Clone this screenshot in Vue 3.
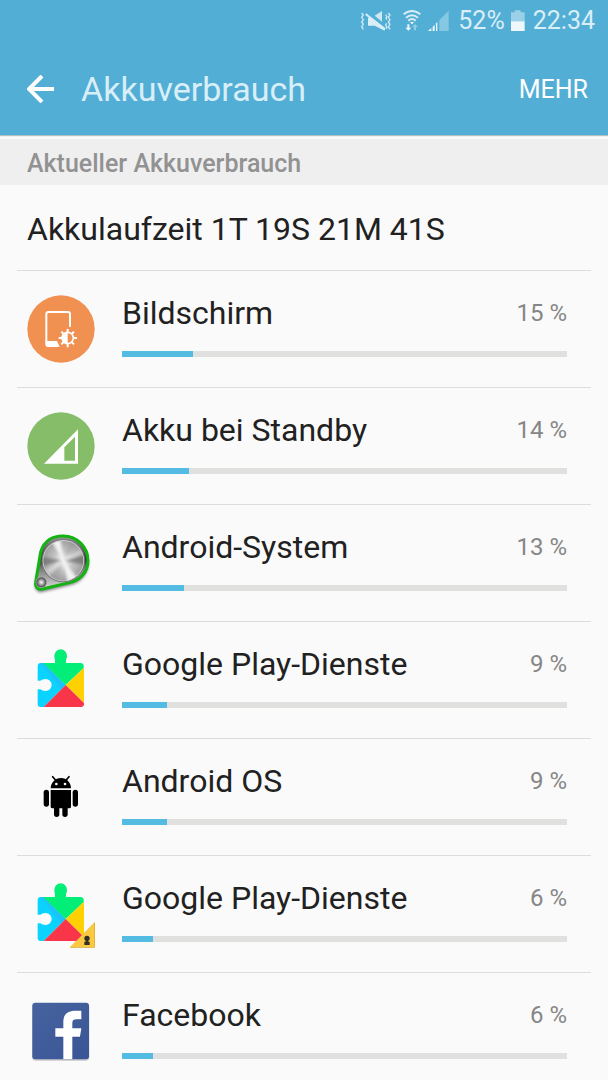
<script setup>
const apps = [
  { id: 1, name: 'Bildschirm',          percent: 15, bar: 16, icon: 'screen' },
  { id: 2, name: 'Akku bei Standby',    percent: 14, bar: 15, icon: 'standby' },
  { id: 3, name: 'Android-System',      percent: 13, bar: 14, icon: 'system' },
  { id: 4, name: 'Google Play-Dienste', percent: 9,  bar: 10, icon: 'play' },
  { id: 5, name: 'Android OS',          percent: 9,  bar: 10, icon: 'android' },
  { id: 6, name: 'Google Play-Dienste', percent: 6,  bar: 7,  icon: 'play-locked' },
  { id: 7, name: 'Facebook',            percent: 6,  bar: 7,  icon: 'facebook' },
]
</script>

<template>
  <div class="screen">
    <header class="top">
      <div class="status">
        <svg class="st-mute" viewBox="0 0 96 66" aria-hidden="true">
          <g fill="none" stroke="#cfe9f4" stroke-width="4">
            <path d="M5 9l5 6-5 7 5 7-5 7 5 7-5 7 5 8" />
            <path d="M85 9l5 6-5 7 5 7-5 7 5 7-5 7 5 8" />
            <path d="M77 14l4 6-3 5 3 4M80 40l-3 5 4 7-3 4" />
          </g>
          <path d="M24 24h12l38 29v9L44 47H24z" fill="#d9eef7" />
          <path d="M44 17L66 3v32z" fill="#cfe9f4" />
          <path d="M17 12l58 46" stroke="#d9eef7" stroke-width="6" />
        </svg>
        <svg class="st-wifi" viewBox="0 0 54 66" aria-hidden="true">
          <g fill="none" stroke="#d9eef7" stroke-width="6">
            <path d="M2 13Q27-7 52 13" />
            <path d="M9 23Q27 8 45 23" />
            <path d="M16 32Q27 22 38 32" />
          </g>
          <path d="M21 37q6-4 12 0l-6 6z" fill="#eef8fc" />
          <path d="M13 43h6v10h6l-9 9-9-9h6z" fill="#eef8fc" />
          <path d="M33 61h6V51h6l-9-9-9 9h6z" fill="#8fcde5" />
        </svg>
        <svg class="st-signal" viewBox="0 0 63 66" aria-hidden="true">
          <path d="M62 2v61H34V30z" fill="#86c7e2" />
          <path d="M0 63l10-9v9zM14 63V50l10-9v22zM20 63h8V36l-8 8z" fill="#eef8fc" />
        </svg>
        <span class="st-level">52%</span>
        <svg class="st-battery" viewBox="0 0 42 66" aria-hidden="true">
          <path d="M11 1h18v6h12v28H0V7h11z" fill="#9bd1e8" />
          <path d="M0 34h41v29H0z" fill="#eef8fc" />
        </svg>
        <span>22:34</span>
      </div>
      <div class="bar">
        <button type="button" class="back" aria-label="Zurück">
          <svg viewBox="0 0 28 28" aria-hidden="true">
            <path d="M15 1L2 14l13 13M2 14h25" fill="none" stroke="#fff" stroke-width="4" />
          </svg>
        </button>
        <h1 class="title">Akkuverbrauch</h1>
        <button type="button" class="more">MEHR</button>
      </div>
    </header>

    <main class="content">
      <h2 class="section">Aktueller Akkuverbrauch</h2>
      <p class="runtime">Akkulaufzeit 1T 19S 21M 41S</p>

      <ul class="list">
        <li v-for="app in apps" :key="app.id" class="row">
          <svg v-if="app.icon === 'screen'" class="icon" viewBox="30 21 216 216" aria-hidden="true">
            <circle cx="138" cy="129" r="101" fill="#f09051" />
            <path d="M165 122V84q0-6-6-6H101q-7 0-7 6v90q0 6 6 6h30" fill="none" stroke="#fff" stroke-width="6" />
            <path d="M92 165h34l8 17H100q-8 0-8-8z" fill="#fff" />
            <circle cx="158" cy="156" r="23" fill="#f09051" />
            <circle cx="158" cy="156" r="17" fill="none" stroke="#fff" stroke-width="5" />
            <path d="M158 138a18 18 0 0 0 0 36z" fill="#fff" />
            <path d="M158 129v9M158 174v10M131 156h9M176 156h10M139 137l7 7M170 168l7 7M139 175l7-7M170 144l7-7" stroke="#fff" stroke-width="6" />
          </svg>

          <svg v-else-if="app.icon === 'standby'" class="icon" viewBox="30 28 216 216" aria-hidden="true">
            <circle cx="138" cy="136" r="101" fill="#86bd69" />
            <path d="M189 86v103H87zM180 108l-32 32v40h32z" fill="#fff" fill-rule="evenodd" />
          </svg>

          <svg v-else-if="app.icon === 'system'" class="icon" viewBox="30 21 216 216" aria-hidden="true">
            <defs>
              <radialGradient id="sysCore">
                <stop offset="0" stop-color="#fff" />
                <stop offset="0.5" stop-color="#c4c4c4" />
                <stop offset="1" stop-color="#a0a0a0" />
              </radialGradient>
              <linearGradient id="sysRim" x1="0" y1="0" x2="0" y2="1">
                <stop offset="0" stop-color="#999" />
                <stop offset="0.45" stop-color="#333" />
                <stop offset="0.6" stop-color="#777" />
                <stop offset="1" stop-color="#ddd" />
              </linearGradient>
              <radialGradient id="sysKnob">
                <stop offset="0" stop-color="#fff" />
                <stop offset="0.4" stop-color="#aaa" />
                <stop offset="0.8" stop-color="#555" />
                <stop offset="1" stop-color="#bbb" />
              </radialGradient>
              <filter id="sysShadow" x="-20%" y="-20%" width="140%" height="140%">
                <feGaussianBlur stdDeviation="5" />
              </filter>
              <filter id="sysSoft"><feGaussianBlur stdDeviation="5" /></filter>
              <clipPath id="sysDisc"><circle cx="145" cy="122" r="60" /></clipPath>
            </defs>
            <path d="M78 97C90 62 116 53 145 54c44 1 75 35 75 75 0 33-21 59-55 67l-83 20c-15 3-24-8-22-23z" fill="#555" opacity="0.75" filter="url(#sysShadow)" />
            <path d="M77 96C88 60 116 47 145 48c42 1 74 33 74 74 0 33-22 58-55 66l-82 19c-14 3-22-7-20-20z" fill="url(#sysRim)" stroke="#12b312" stroke-width="9" />
            <circle cx="145" cy="122" r="65" fill="#777" />
            <circle cx="145" cy="122" r="62" fill="#ddd" />
            <circle cx="145" cy="122" r="60" fill="url(#sysCore)" />
            <g clip-path="url(#sysDisc)">
              <g filter="url(#sysSoft)">
                <path d="M145 122L106 58l30-8zM145 122l14 70 30-16z" fill="#fff" opacity="0.85" />
                <path d="M145 122l66-18v30zM145 122l-66-12v28z" fill="#666" opacity="0.65" />
                <path d="M145 122l20-70 22 18zM145 122l-18 66-26-20z" fill="#888" opacity="0.25" />
                <path d="M145 122l58-38 8 14zM145 122l-62 30 16 18z" fill="#fff" opacity="0.4" />
              </g>
            </g>
            <circle cx="79" cy="187" r="17" fill="url(#sysKnob)" />
          </svg>

          <svg v-else-if="app.icon === 'play' || app.icon === 'play-locked'" class="icon" viewBox="30 27 216 216" aria-hidden="true">
            <path d="M86 84h-9q-9 0-9 9v44h8q5-5 16-5a18 18 0 0 1 0 36q-11 0-16-5h-8v44q0 9 9 9h9l66-66z" fill="#0bd3ff" />
            <path d="M86 84h-9l62 80 13-14z" fill="#24baf5" opacity="0.6" />
            <path d="M85 84h35v-9q-2-5-2-13a19 19 0 0 1 38 0q0 8-3 13v9h44q7 0 9 6v9l-54 51z" fill="#02ee76" />
            <path d="M207 98v105l-55-53z" fill="#ffd102" />
            <path d="M86 216h112q8 0 9-8v-4l-55-54z" fill="#f93549" />
            <g v-if="app.icon === 'play-locked'">
              <path d="M240 159v77h-76z" fill="#d9a934" />
              <path d="M238 161v73h-72z" fill="#fbc940" />
              <circle cx="216" cy="208" r="8" fill="#33302c" />
              <path d="M212 210h8v10h-8zM208 218h16v10h-16z" fill="#33302c" />
            </g>
          </svg>

          <svg v-else-if="app.icon === 'android'" class="icon" viewBox="30 5 216 216" aria-hidden="true">
            <path d="M107 87c0-16 13-31 31-31s30 15 30 31z" />
            <path d="M113 52l11 13M162 52l-11 13" stroke="#000" stroke-width="5" stroke-linecap="round" />
            <circle cx="124" cy="74" r="4" fill="#fafafa" />
            <circle cx="150" cy="74" r="4" fill="#fafafa" />
            <path d="M107 92h61v50q0 5-5 5h-51q-5 0-5-5z" />
            <rect x="86" y="91" width="16" height="51" rx="8" />
            <rect x="173" y="91" width="16" height="51" rx="8" />
            <rect x="117" y="128" width="16" height="45" rx="8" />
            <rect x="142" y="128" width="16" height="45" rx="8" />
          </svg>

          <svg v-else class="icon" viewBox="30 18 216 216" aria-hidden="true">
            <defs>
              <linearGradient id="fbBlue" x1="0" y1="0" x2="1" y2="1">
                <stop offset="0" stop-color="#46639f" />
                <stop offset="1" stop-color="#3a5596" />
              </linearGradient>
            </defs>
            <rect x="51" y="44" width="172" height="171" rx="10" fill="#c9c9cb" />
            <rect x="52" y="41" width="170" height="170" rx="9" fill="url(#fbBlue)" />
            <path d="M160 211V102q0-23 22-23h17M123 135h75" fill="none" stroke="#2f4a88" stroke-width="26" opacity="0.5" />
            <path d="M145 211v-68h-24v-25h24V97c0-22 15-32 36-32h18v26h-13c-10 0-14 3-14 11v16h27l-4 25h-23v68z" fill="#fff" />
          </svg>

          <div class="info">
            <div class="line">
              <span class="name">{{ app.name }}</span>
              <span class="percent">{{ app.percent }} %</span>
            </div>
            <div class="track" role="progressbar" :aria-label="app.name" :aria-valuenow="app.percent" aria-valuemin="0" aria-valuemax="100">
              <div class="fill" :style="{ width: app.bar + '%' }"></div>
            </div>
          </div>
        </li>
      </ul>
    </main>
  </div>
</template>

<style>
body { margin: 0; background: #fafafa; }
</style>

<style scoped>
.screen {
  display: flex; flex-direction: column;
  height: 100vh;
  background: #fafafa; color: #212121;
  font-family: Roboto, "Liberation Sans", sans-serif;
}

/* header */
.top {
  flex-shrink: 0; position: relative;
  background: #52aed5; color: #fff;
  box-shadow: 0 1px 1px #b4bfc4;
}
.status {
  display: flex; align-items: center; justify-content: flex-end;
  height: 42px; padding-right: 13px;
  font-size: 25px; line-height: 44px; color: #d9eef7;
}
.status svg { height: 22px; flex-shrink: 0; }
.st-mute { width: 32px; margin-right: 11px; }
.st-wifi { width: 18px; margin-right: 7px; }
.st-signal { width: 21px; margin-right: 9px; }
.st-level { margin-right: 6px; }
.st-battery { width: 14px; margin-right: 8px; }

.bar {
  display: flex; align-items: center;
  height: 93px; padding: 0 20px 0 27px;
}
.back, .more {
  border: none; background: transparent; padding: 0;
  color: inherit; font-family: inherit; cursor: pointer;
}
.back { display: flex; width: 28px; margin-right: 26px; }
.back svg { width: 28px; height: 28px; }
.title {
  flex: 1; margin: 0;
  font-size: 34px; font-weight: 400; line-height: 40px; color: #d9eef7;
}
.more { font-size: 25px; line-height: 32px; padding-top: 2px; }

/* content */
.content {
  flex: 1; min-height: 0; overflow-y: auto;
  scrollbar-width: none;
  padding-top: 4px;
}
.section {
  margin: 0; padding: 4px 27px 0;
  background: #efefef; color: #929292;
  font-size: 25px; font-weight: 500; line-height: 42px;
}
.runtime {
  margin: 0; padding: 4px 27px 0;
  font-size: 32px; line-height: 81px;
}

/* app list */
.list { list-style: none; margin: 0; padding: 0 17px; }
.row {
  display: flex; align-items: flex-start;
  height: 117px; box-sizing: border-box;
  padding: 22px 24px 0 8px;
  border-top: 1px solid #dddddd;
}
.icon { width: 72px; height: 72px; flex-shrink: 0; margin-right: 25px; }
.info { flex: 1; min-width: 0; }
.line {
  display: flex; align-items: center; justify-content: space-between;
  line-height: 40px; margin-bottom: 18px;
}
.name { font-size: 32px; }
.percent { font-size: 24px; color: #868686; }
.track { height: 6px; background: #e0e0df; }
.fill { height: 100%; background: #54bce2; }
</style>
